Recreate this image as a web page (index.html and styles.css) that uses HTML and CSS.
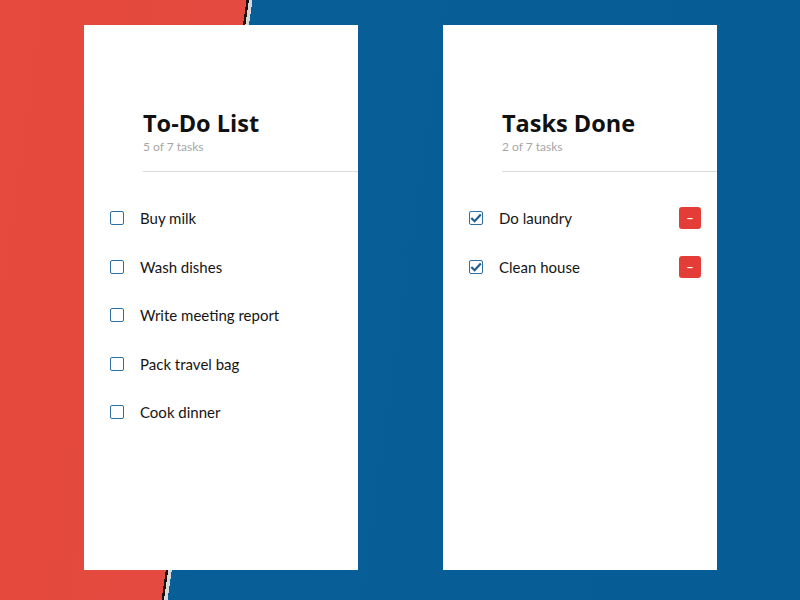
FILE: index.html
```html
<!DOCTYPE html>
<html lang="en">
<head>
<meta charset="utf-8">
<title>Tasks</title>
<link rel="stylesheet" href="styles.css">
</head>
<body>
<main class="board">
  <section class="card">
    <header class="card-head">
      <h1 class="card-title">To-Do List</h1>
      <p class="card-count">5 of 7 tasks</p>
    </header>
    <ul class="tasks">
      <li class="task"><span class="check"></span><span class="task-name">Buy milk</span></li>
      <li class="task"><span class="check"></span><span class="task-name">Wash dishes</span></li>
      <li class="task"><span class="check"></span><span class="task-name">Write meeting report</span></li>
      <li class="task"><span class="check"></span><span class="task-name">Pack travel bag</span></li>
      <li class="task"><span class="check"></span><span class="task-name">Cook dinner</span></li>
    </ul>
  </section>
  <section class="card">
    <header class="card-head">
      <h1 class="card-title">Tasks Done</h1>
      <p class="card-count">2 of 7 tasks</p>
    </header>
    <ul class="tasks">
      <li class="task"><span class="check checked"><svg viewBox="0 0 12 12" width="12" height="12"><path d="M1.3 6 L4.6 9.2 L10.8 2.4" fill="none" stroke="#1f5f94" stroke-width="2.2"/></svg></span><span class="task-name">Do laundry</span><button class="remove">&minus;</button></li>
      <li class="task"><span class="check checked"><svg viewBox="0 0 12 12" width="12" height="12"><path d="M1.3 6 L4.6 9.2 L10.8 2.4" fill="none" stroke="#1f5f94" stroke-width="2.2"/></svg></span><span class="task-name">Clean house</span><button class="remove">&minus;</button></li>
    </ul>
  </section>
</main>
</body>
</html>
```
FILE: styles.css
```css
html, body {
  margin: 0;
  padding: 0;
}
body {
  width: 800px;
  height: 600px;
  overflow: hidden;
  background: linear-gradient(98.06deg,
    #e6493e 0, #e44a3f 244px,
    #1a1212 244px, #1a1212 246.5px,
    #d9d9d9 246.5px, #d9d9d9 250px,
    #085f97 250px, #065d95 100%);
  font-family: "Lato", "Open Sans", sans-serif;
}
.board {
  display: flex;
  gap: 85px;
  padding: 25px 0 0 84px;
}
.card {
  width: 274px;
  height: 545px;
  background: #fff;
  box-sizing: border-box;
}
.card-head {
  padding: 81px 0 0 59px;
}
.card-title {
  margin: 0;
  font-family: "Open Sans", sans-serif;
  font-weight: 700;
  font-size: 23.5px;
  line-height: 34px;
  color: #111;
  letter-spacing: 0;
}
.card-count {
  margin: 0;
  padding-bottom: 17px;
  font-size: 12px;
  line-height: 14px;
  color: #a6a6a6;
  border-bottom: 1px solid #dcdcdc;
}
.tasks {
  list-style: none;
  margin: 0;
  padding: 35px 16px 0 26px;
  display: flex;
  flex-direction: column;
  gap: 26.6px;
}
.task {
  display: flex;
  align-items: center;
  height: 22px;
}
.check {
  width: 14px;
  height: 14px;
  box-sizing: border-box;
  border: 1.5px solid #2e6fa2;
  border-radius: 2px;
  display: flex;
  align-items: center;
  justify-content: center;
  flex: none;
}
.check svg {
  display: block;
}
.task-name {
  margin-left: 16px;
  font-size: 15px;
  color: #151515;
  flex: 1;
}
.remove {
  width: 22px;
  height: 22px;
  border: 0;
  border-radius: 3px;
  background: #e43d37;
  color: #fff;
  font-family: "Lato", sans-serif;
  font-size: 12px;
  font-weight: 700;
  padding: 0;
  line-height: 22px;
}
```
